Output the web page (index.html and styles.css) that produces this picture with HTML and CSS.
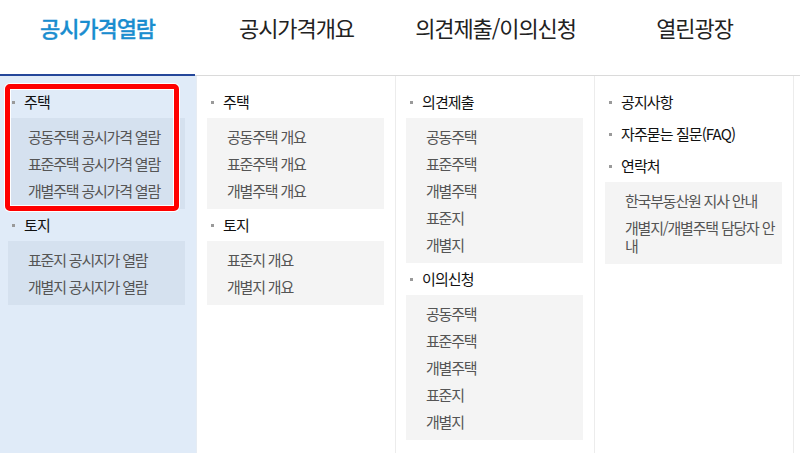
FILE: index.html
```html
<!DOCTYPE html>
<html lang="ko">
<head>
<meta charset="utf-8">
<title>공시가격 메뉴</title>
<link rel="stylesheet" href="styles.css">
</head>
<body>
<nav class="gnb">
  <div class="tabbar">
    <ul class="tabs">
      <li class="tab active">공시가격열람</li>
      <li class="tab">공시가격개요</li>
      <li class="tab">의견제출/이의신청</li>
      <li class="tab">열린광장</li>
    </ul>
  </div>
  <div class="panels">
    <div class="col col-active">
      <div class="highlight"></div>
      <p class="sub-title">주택</p>
      <ul class="list">
        <li>공동주택 공시가격 열람</li>
        <li>표준주택 공시가격 열람</li>
        <li>개별주택 공시가격 열람</li>
      </ul>
      <p class="sub-title">토지</p>
      <ul class="list">
        <li>표준지 공시지가 열람</li>
        <li>개별지 공시지가 열람</li>
      </ul>
    </div>
    <div class="col">
      <p class="sub-title">주택</p>
      <ul class="list">
        <li>공동주택 개요</li>
        <li>표준주택 개요</li>
        <li>개별주택 개요</li>
      </ul>
      <p class="sub-title">토지</p>
      <ul class="list">
        <li>표준지 개요</li>
        <li>개별지 개요</li>
      </ul>
    </div>
    <div class="col">
      <p class="sub-title">의견제출</p>
      <ul class="list">
        <li>공동주택</li>
        <li>표준주택</li>
        <li>개별주택</li>
        <li>표준지</li>
        <li>개별지</li>
      </ul>
      <p class="sub-title">이의신청</p>
      <ul class="list">
        <li>공동주택</li>
        <li>표준주택</li>
        <li>개별주택</li>
        <li>표준지</li>
        <li>개별지</li>
      </ul>
    </div>
    <div class="col">
      <p class="sub-title">공지사항</p>
      <p class="sub-title">자주묻는 질문(FAQ)</p>
      <p class="sub-title">연락처</p>
      <ul class="list">
        <li>한국부동산원 지사 안내</li>
        <li>개별지/개별주택 담당자 안내</li>
      </ul>
    </div>
  </div>
</nav>
</body>
</html>
```

FILE: styles.css
```css
* { box-sizing: border-box; }
html, body {
  margin: 0;
  padding: 0;
  background: #ffffff;
}
body {
  width: 800px;
  height: 453px;
  overflow: hidden;
  font-family: "Noto Sans CJK KR", "Noto Sans", sans-serif;
  color: #222;
}
ul, p { margin: 0; padding: 0; list-style: none; }

.gnb {
  display: flex;
  flex-direction: column;
  height: 453px;
}

.tabbar {
  border-bottom: 1px solid #dadada;
  height: 76px;
}
.tabs {
  display: grid;
  grid-template-columns: repeat(4, 199px);
  margin-left: -2px;
  height: 75px;
}
.tab {
  text-align: center;
  font-size: 22px;
  letter-spacing: -1.1px;
  line-height: 30px;
  padding-top: 12px;
  color: #222;
}
.tab.active {
  color: #1a8dcf;
  font-weight: 500;
  -webkit-text-stroke: 0.3px #1a8dcf;
  border-bottom: 2px solid #24479a;
  margin-bottom: -1px;
  margin-left: 2px;
  margin-right: 2px;
}

.panels {
  flex: 1;
  display: grid;
  grid-template-columns: repeat(4, 199px);
  margin-left: -2px;
}
.col {
  position: relative;
  border-right: 1px solid #ececec;
  padding: 10px 11px 0 10px;
}
.col-active {
  background: #e0ebf8;
  border-right-color: #e6ecf3;
}

.sub-title {
  position: relative;
  height: 32px;
  line-height: 32px;
  padding-left: 16px;
  font-size: 15px;
  letter-spacing: -0.9px;
  color: #111;
}
.sub-title::before {
  content: "";
  position: absolute;
  left: 4px;
  top: 15px;
  width: 3px;
  height: 3px;
  background: #9a9a9a;
}

.list {
  background: #f4f4f4;
  padding: 5px 0;
}
.col-active .list {
  background: #d5e1ef;
}
.list li {
  padding: 4.5px 6px 4.5px 20px;
  line-height: 18px;
  font-size: 15px;
  letter-spacing: -1.2px;
  color: #555;
}

.highlight {
  position: absolute;
  left: 7px;
  top: 8px;
  width: 174px;
  height: 127px;
  border: 5px solid #ff0000;
  border-radius: 5px;
  box-shadow: 0 0 0 1px #ffffff, inset 0 0 0 1px #ffffff;
  pointer-events: none;
  z-index: 2;
}
```
